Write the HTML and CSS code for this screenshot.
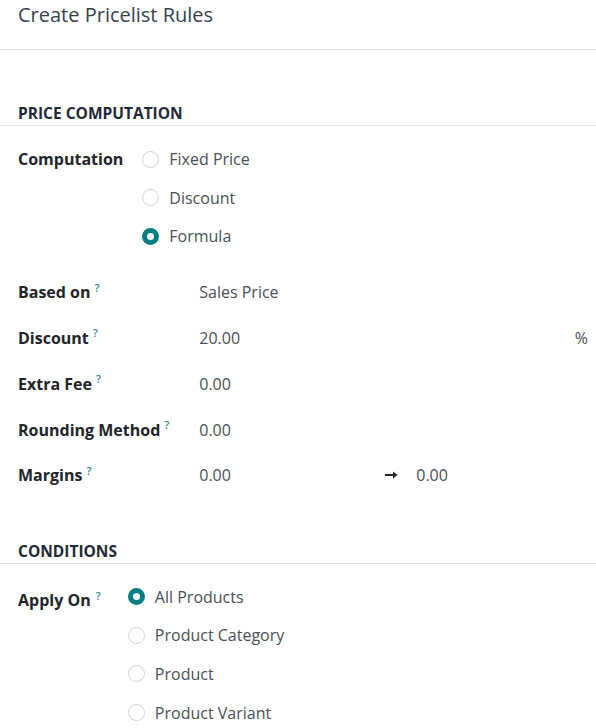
FILE: index.html
```html
<!DOCTYPE html>
<html lang="en">
<head>
  <meta charset="UTF-8" />
  <title>Create Pricelist Rules</title>
  <link rel="stylesheet" href="styles.css">
</head>
<body>
  <div class="modal">
    <div class="modal-header">
      <h4 class="modal-title">Create Pricelist Rules</h4>
    </div>

    <div class="section-title first">PRICE COMPUTATION</div>

    <div class="group radios-group">
      <div class="label">Computation</div>
      <div class="radio-list">
        <label class="radio"><span class="dot"></span>Fixed Price</label>
        <label class="radio"><span class="dot"></span>Discount</label>
        <label class="radio"><span class="dot on"></span>Formula</label>
      </div>
    </div>

    <div class="group fields">
      <div class="label">Based on <sup>?</sup></div>
      <div class="value">Sales Price</div>

      <div class="label">Discount <sup>?</sup></div>
      <div class="value split"><span>20.00</span><span class="unit">%</span></div>

      <div class="label">Extra Fee <sup>?</sup></div>
      <div class="value">0.00</div>

      <div class="label">Rounding Method <sup>?</sup></div>
      <div class="value">0.00</div>

      <div class="label">Margins <sup>?</sup></div>
      <div class="value margins">
        <span class="m-min">0.00</span>
        <svg class="arrow" width="13" height="8" viewBox="0 0 13 8"><path d="M0 4h9" stroke="#212529" stroke-width="2"/><path d="M8 0.5L12.5 4 8 7.5z" fill="#212529"/></svg>
        <span>0.00</span>
      </div>
    </div>

    <div class="section-title">CONDITIONS</div>

    <div class="group radios-group apply">
      <div class="label">Apply On <sup>?</sup></div>
      <div class="radio-list">
        <label class="radio"><span class="dot on"></span>All Products</label>
        <label class="radio"><span class="dot"></span>Product Category</label>
        <label class="radio"><span class="dot"></span>Product</label>
        <label class="radio"><span class="dot"></span>Product Variant</label>
      </div>
    </div>
  </div>
</body>
</html>
```

FILE: styles.css
```css
* { box-sizing: border-box; }
html, body {
  margin: 0;
  padding: 0;
  background: #fff;
  font-family: "Open Sans", "Noto Sans", sans-serif;
  font-size: 16px;
  color: #212529;
}
.modal {
  width: 596px;
  height: 728px;
  overflow: hidden;
}
.modal-header {
  height: 50px;
  padding: 3px 18px 0;
  border-bottom: 1px solid #dee2e6;
}
.modal-title {
  margin: 0;
  font-size: 20px;
  font-weight: 500;
  line-height: 23px;
  color: #374151;
}
.section-title {
  margin-top: 43px;
  padding: 0 18px 2px;
  line-height: 20px;
  font-size: 15.5px;
  font-weight: 700;
  color: #1f2937;
  border-bottom: 1px solid #dee2e6;
}
.section-title.first { margin-top: 53px; }

.group {
  display: grid;
  grid-template-columns: max-content 1fr;
  padding: 0 6px 0 18px;
}
.label {
  font-weight: 700;
  color: #212529;
  white-space: nowrap;
}
.label sup {
  font-size: 11px;
  font-weight: 600;
  color: #2a8a9c;
  margin-left: 1px;
}

.radios-group {
  margin-top: 14px;
  column-gap: 19px;
}
.radios-group .label { line-height: 38.5px; }
.apply { margin-top: 13px; column-gap: 27px; }
.radio-list { display: flex; flex-direction: column; }
.radio {
  display: flex;
  align-items: center;
  gap: 10px;
  height: 38.5px;
  color: #495057;
}
.apply .radio { height: 38.7px; }
.dot {
  width: 17px;
  height: 17px;
  border-radius: 50%;
  border: 1px solid #ced4da;
}
.dot.on { border: 5px solid #017e84; }

.fields {
  margin-top: 14px;
  column-gap: 30px;
  grid-auto-rows: 45.75px;
}
.fields .label,
.fields .value {
  display: flex;
  align-items: center;
}
.fields .label sup { align-self: flex-start; margin-top: 10px; margin-left: 4px; }
.value { color: #495057; }
.split { justify-content: space-between; }
.unit { padding-right: 2px; }
.m-min { width: 186px; }
.arrow { margin-right: 18px; }
```
